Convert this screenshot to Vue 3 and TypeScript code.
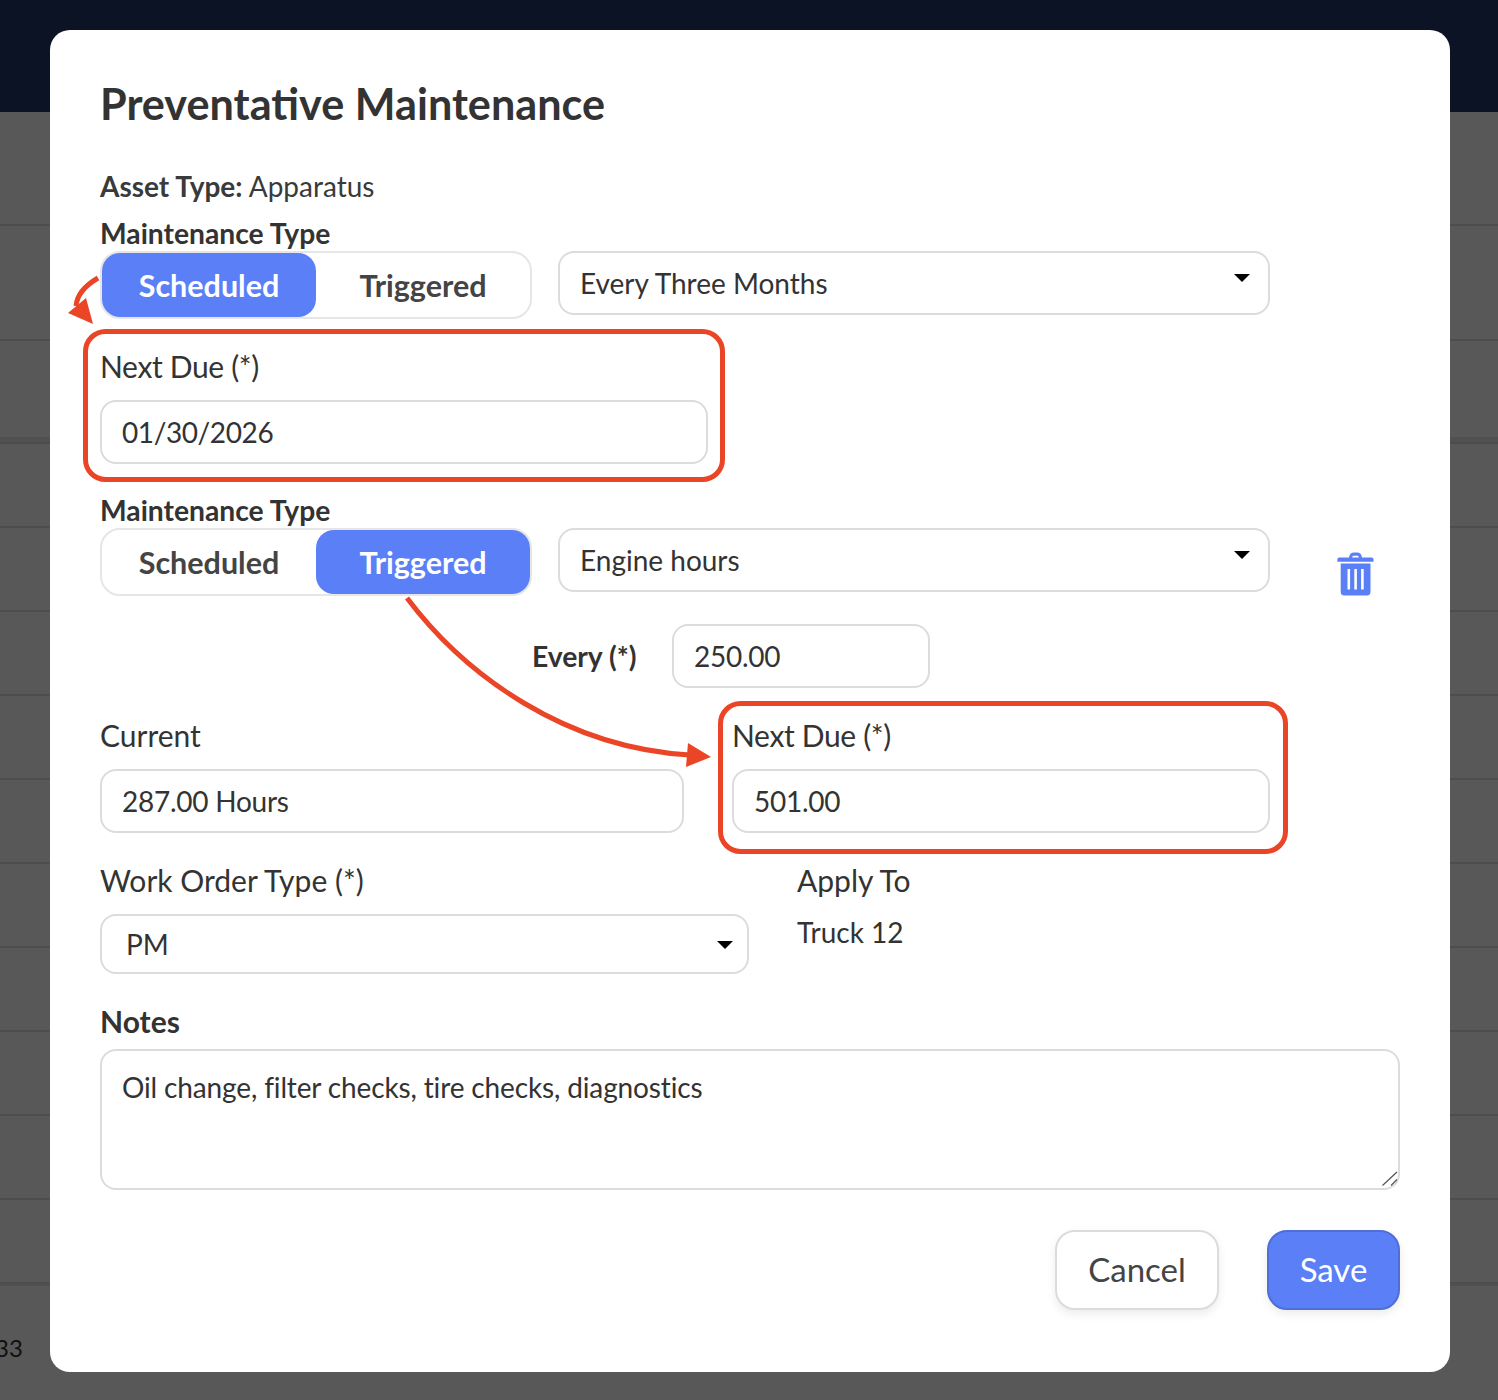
<script setup lang="ts">
const topRows = [114, 115]
const rows = Array.from({ length: 10 }, (_, i) => i)
const notes = 'Oil change, filter checks, tire checks, diagnostics'
</script>

<template>
  <div class="page">
    <header class="page__bar"></header>
    <div v-for="h in topRows" :key="h" class="page__row" :style="{ height: h + 'px' }"></div>
    <div class="page__row page__row--band"></div>
    <div v-for="row in rows" :key="row" class="page__row page__row--std"></div>
    <div class="page__row page__row--band2"></div>
    <div class="page__count">33</div>

    <div class="modal">
      <h1 class="modal__title">Preventative Maintenance</h1>
      <p class="asset"><strong>Asset Type:</strong> Apparatus</p>

      <div class="label label--bold label--type">Maintenance Type</div>
      <div class="type-row">
        <div class="toggle">
          <span class="toggle__opt toggle__opt--on">Scheduled</span>
          <span class="toggle__opt">Triggered</span>
        </div>
        <div class="select select--wide">Every Three Months<i class="caret"></i></div>
      </div>

      <div class="label label--due">Next Due (*)</div>
      <input class="input input--date" value="01/30/2026" />

      <div class="label label--bold label--type2">Maintenance Type</div>
      <div class="type-row">
        <div class="toggle">
          <span class="toggle__opt">Scheduled</span>
          <span class="toggle__opt toggle__opt--on">Triggered</span>
        </div>
        <div class="select select--wide">Engine hours<i class="caret"></i></div>
        <svg class="trash" width="37" height="44" viewBox="0 0 37 44">
          <path fill="#5a7ff7" d="M12 5.500C12.500 2 14 .6 17 .6h3c3 0 4.500 1.400 5 4.900h9.500c1.300 0 2 .8 2 2v2.200H.4V7.500c0-1.200.7-2 2-2zM15 5.500h7c-.3-1.200-1-1.700-2-1.700h-3c-1 0-1.700.5-2 1.700z" />
          <path fill="#5a7ff7" d="M3.700 11.500h29.800V40c0 2.200-1.300 3.500-3.500 3.500H7.200c-2.200 0-3.500-1.300-3.500-3.500z" />
          <path fill="#fff" d="M10.500 17h2.600v20.500h-2.600zM17.300 17h2.600v20.500h-2.600zM24.100 17h2.600v20.500h-2.600z" />
        </svg>
      </div>

      <div class="every">
        <span class="every__label">Every (*)</span>
        <input class="input input--every" value="250.00" />
      </div>

      <div class="pair">
        <div class="pair__left">
          <div class="label">Current</div>
          <input class="input" value="287.00 Hours" />
        </div>
        <div class="pair__right">
          <div class="label label--tight">Next Due (*)</div>
          <input class="input" value="501.00" />
        </div>
      </div>

      <div class="work">
        <div class="work__left">
          <div class="label">Work Order Type (*)</div>
          <div class="select select--short">PM<i class="caret caret--short"></i></div>
        </div>
        <div class="work__right">
          <div class="label">Apply To</div>
          <div class="apply">Truck 12</div>
        </div>
      </div>

      <div class="label label--bold label--notes">Notes</div>
      <textarea class="notes" :value="notes"></textarea>

      <div class="actions">
        <button class="btn">Cancel</button>
        <button class="btn btn--save">Save</button>
      </div>
    </div>

    <svg class="marks" width="1498" height="1400" viewBox="0 0 1498 1400">
      <rect x="85.500" y="331.500" width="637" height="148" rx="20" class="marks__box" />
      <rect x="720.500" y="703.500" width="565" height="148" rx="20" class="marks__box" />
      <path d="M98 278C86 285 77 294 76 306" class="marks__line" />
      <path d="M68 313L93 324L86 298Z" class="marks__head" />
      <path d="M407 598C465 675 565 748 690 755" class="marks__line" />
      <path d="M688 743L711 757L686 767Z" class="marks__head" />
      <path d="M1382.500 1185.500L1397 1172M1391 1185.500L1397 1179.500" class="marks__grip" />
    </svg>
  </div>
</template>

<style>
body {
  background: #585858;
}
</style>

<style scoped>
.page {
  position: relative;
  width: 1498px;
  height: 1400px;
  overflow: hidden;
  background: #585858;
  font-family: Lato, "Liberation Sans", sans-serif;
  color: #333;
}

.page__bar {
  height: 112px;
  background: #0b1324;
}

.page__row {
  box-sizing: border-box;
  border-bottom: 2px solid #4d4d4f;
}

.page__row--band {
  height: 103px;
  border-bottom: 2px solid #4c4c4f;
  background: linear-gradient(to bottom, #585858 96px, #515151 96px);
}

.page__row--std {
  height: 84px;
}

.page__row--band2 {
  height: 2px;
  border-bottom: 2px solid #505052;
}

.page__count {
  position: absolute;
  left: -5px;
  top: 1334px;
  font-size: 24px;
  line-height: 28px;
  color: #111;
}

.modal {
  position: absolute;
  left: 50px;
  top: 30px;
  box-sizing: border-box;
  width: 1400px;
  height: 1342px;
  padding: 0 50px;
  background: #fff;
  border-radius: 20px;
}

.modal__title {
  margin: 47px 0 0;
  font-size: 43.2px;
  line-height: 52px;
  font-weight: 700;
  color: #333;
}

.asset {
  margin: 42px 0 0;
  font-size: 28px;
  line-height: 30px;
  color: #3a3a3a;
}

.asset strong {
  font-weight: 700;
}

.label {
  font-size: 30px;
  line-height: 32px;
  color: #333;
}

.label--tight {
  letter-spacing: -0.35px;
}

.label--bold {
  font-size: 28.25px;
  font-weight: 700;
}

.label--type {
  margin-top: 16px;
  height: 34px;
  line-height: 32px;
}

.type-row {
  display: flex;
  align-items: flex-start;
}

.toggle {
  box-sizing: border-box;
  display: flex;
  width: 432px;
  height: 68px;
  border: 2px solid #e6e6e6;
  border-radius: 20px;
}

.toggle__opt {
  flex: 0 0 214px;
  display: flex;
  align-items: center;
  justify-content: center;
  border-radius: 18px;
  font-size: 30.5px;
  font-weight: 700;
  color: #444;
}

.toggle__opt--on {
  background: #5a7ff7;
  color: #fff;
}

.select {
  box-sizing: border-box;
  position: relative;
  display: flex;
  align-items: center;
  border: 2px solid #dcdcdc;
  border-radius: 16px;
  background: #fff;
  font-size: 28px;
  color: #333;
}

.select--wide {
  width: 712px;
  height: 64px;
  margin-left: 26px;
  padding-left: 20px;
}

.select--short {
  width: 649px;
  height: 60px;
  padding-left: 24px;
}

.caret {
  position: absolute;
  right: 18px;
  top: 21px;
  border-left: 8px solid transparent;
  border-right: 8px solid transparent;
  border-top: 8px solid #000;
}

.caret--short {
  right: 14px;
  top: 25px;
}

.trash {
  margin: 24px 0 0 67px;
}

.label--due {
  margin-top: 30px;
  height: 51px;
  line-height: 34px;
  letter-spacing: -0.35px;
}

.input {
  box-sizing: border-box;
  display: block;
  width: 100%;
  height: 64px;
  padding: 0 20px;
  border: 2px solid #dcdcdc;
  border-radius: 16px;
  outline: none;
  background: #fff;
  font-family: inherit;
  font-size: 28px;
  letter-spacing: -0.25px;
  color: #333;
}

.input--date {
  width: 608px;
  letter-spacing: -0.4px;
}

.label--type2 {
  margin-top: 29px;
  height: 35px;
  line-height: 34px;
}

.every {
  display: flex;
  align-items: center;
  margin-top: 28px;
  padding-left: 432px;
}

.every__label {
  width: 140px;
  font-size: 28.25px;
  font-weight: 700;
}

.every .input--every {
  width: 258px;
}

.pair {
  display: flex;
  margin-top: 31px;
}

.pair .label {
  height: 50px;
}

.pair__left {
  width: 584px;
}

.pair__right {
  width: 538px;
  margin-left: 48px;
}

.work {
  display: flex;
  margin-top: 31px;
}

.work .label {
  height: 50px;
}

.work__left {
  width: 649px;
}

.work__right {
  margin-left: 48px;
}

.apply {
  margin-top: 1px;
  font-size: 28px;
  line-height: 34px;
  color: #333;
}

.label--notes {
  margin-top: 31px;
  height: 44px;
  font-size: 30px;
}

.notes {
  box-sizing: border-box;
  display: block;
  width: 100%;
  height: 141px;
  padding: 18px 20px;
  border: 2px solid #dcdcdc;
  border-radius: 16px;
  outline: none;
  resize: none;
  font-family: inherit;
  font-size: 28px;
  letter-spacing: -0.14px;
  line-height: 36px;
  color: #333;
}

.actions {
  display: flex;
  justify-content: flex-end;
  gap: 48px;
  margin-top: 40px;
}

.btn {
  box-sizing: border-box;
  width: 164px;
  height: 80px;
  padding-bottom: 4px;
  border: 2px solid #dcdcdc;
  border-radius: 20px;
  background: #fff;
  box-shadow: 0 4px 10px rgba(0, 0, 0, 0.08);
  font-family: inherit;
  font-size: 33px;
  color: #444;
}

.btn--save {
  width: 133px;
  border-color: #4f6fd6;
  background: #5a7ff7;
  color: #fff;
}

.marks {
  position: absolute;
  left: 0;
  top: 0;
  pointer-events: none;
}

.marks__box,
.marks__line {
  fill: none;
  stroke: #ea4526;
  stroke-width: 5;
}

.marks__head {
  fill: #ea4526;
}

.marks__grip {
  fill: none;
  stroke: #555;
  stroke-width: 1.2;
}
</style>
